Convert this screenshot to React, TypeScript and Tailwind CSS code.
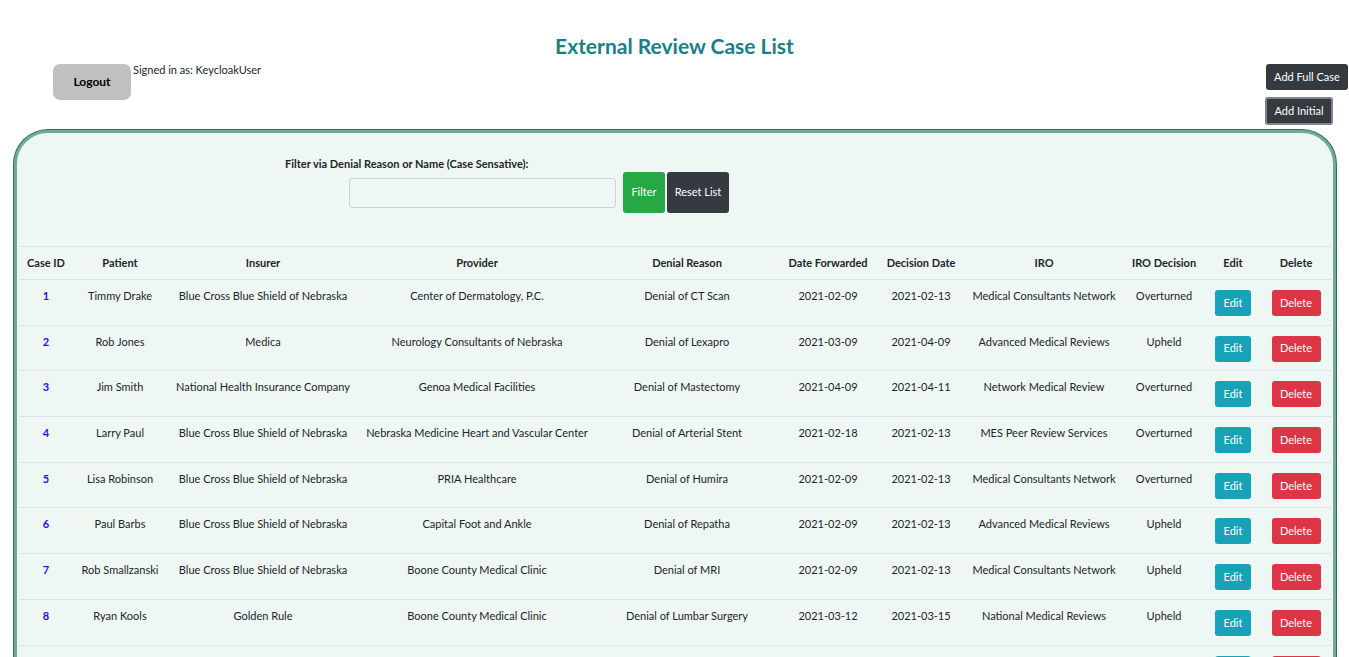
const cases = [
  { id: 1, patient: "Timmy Drake", insurer: "Blue Cross Blue Shield of Nebraska", provider: "Center of Dermatology, P.C.", reason: "Denial of CT Scan", forwarded: "2021-02-09", decided: "2021-02-13", iro: "Medical Consultants Network", decision: "Overturned" },
  { id: 2, patient: "Rob Jones", insurer: "Medica", provider: "Neurology Consultants of Nebraska", reason: "Denial of Lexapro", forwarded: "2021-03-09", decided: "2021-04-09", iro: "Advanced Medical Reviews", decision: "Upheld" },
  { id: 3, patient: "Jim Smith", insurer: "National Health Insurance Company", provider: "Genoa Medical Facilities", reason: "Denial of Mastectomy", forwarded: "2021-04-09", decided: "2021-04-11", iro: "Network Medical Review", decision: "Overturned" },
  { id: 4, patient: "Larry Paul", insurer: "Blue Cross Blue Shield of Nebraska", provider: "Nebraska Medicine Heart and Vascular Center", reason: "Denial of Arterial Stent", forwarded: "2021-02-18", decided: "2021-02-13", iro: "MES Peer Review Services", decision: "Overturned" },
  { id: 5, patient: "Lisa Robinson", insurer: "Blue Cross Blue Shield of Nebraska", provider: "PRIA Healthcare", reason: "Denial of Humira", forwarded: "2021-02-09", decided: "2021-02-13", iro: "Medical Consultants Network", decision: "Overturned" },
  { id: 6, patient: "Paul Barbs", insurer: "Blue Cross Blue Shield of Nebraska", provider: "Capital Foot and Ankle", reason: "Denial of Repatha", forwarded: "2021-02-09", decided: "2021-02-13", iro: "Advanced Medical Reviews", decision: "Upheld" },
  { id: 7, patient: "Rob Smallzanski", insurer: "Blue Cross Blue Shield of Nebraska", provider: "Boone County Medical Clinic", reason: "Denial of MRI", forwarded: "2021-02-09", decided: "2021-02-13", iro: "Medical Consultants Network", decision: "Upheld" },
  { id: 8, patient: "Ryan Kools", insurer: "Golden Rule", provider: "Boone County Medical Clinic", reason: "Denial of Lumbar Surgery", forwarded: "2021-03-12", decided: "2021-03-15", iro: "National Medical Reviews", decision: "Upheld" },
  { id: 9, patient: "Sara Lane", insurer: "Medica", provider: "PRIA Healthcare", reason: "Denial of Physical Therapy", forwarded: "2021-03-20", decided: "2021-03-28", iro: "Network Medical Review", decision: "Upheld" },
];

const headers = ["Case ID", "Patient", "Insurer", "Provider", "Denial Reason", "Date Forwarded", "Decision Date", "IRO", "IRO Decision", "Edit", "Delete"];

export default function App() {
  return (
    <div className="min-h-screen bg-white text-[#212529] font-['Lato','Open_Sans',sans-serif]">
      <h1 className="pt-[32px] text-center text-[21px] font-bold leading-[27px] text-[#17808a]">External Review Case List</h1>

      <div className="mt-[5px] flex justify-between">
        <div className="flex items-start pl-[53px]">
          <button className="h-[36px] w-[78px] rounded-[7px] bg-[#c0c0c0] text-[12px] font-bold text-black">Logout</button>
          <span className="ml-[2px] -mt-[1px] text-[11px] leading-[14px]">Signed in as: KeycloakUser</span>
        </div>
        <div className="flex flex-col items-start pr-[1px]">
          <button className="h-[26px] w-[82px] rounded-[3px] bg-[#343a40] text-[11px] text-white">Add Full Case</button>
          <button className="mt-[7px] -ml-[1px] h-[28px] w-[68px] rounded-[3px] border-2 border-[#7d838a] bg-[#343a40] text-[11px] text-white">Add Initial</button>
        </div>
      </div>

      <div className="mt-[5px] ml-[14px] mr-[13px] rounded-tl-[34px] rounded-tr-[34px] border-[3px] border-[#6aae94] bg-[#eff7f4] px-[2px] shadow-[0_0_0_1px_#3d6b59]">
        <div className="pt-[24px]">
          <div className="pl-[266px] text-[11px] font-bold leading-[14px]">Filter via Denial Reason or Name (Case Sensative):</div>
          <div className="mt-[1px] flex items-center pl-[330px]">
            <input className="h-[30px] w-[267px] rounded-[3px] border border-[#ced4da] bg-[#eff7f4]" />
            <button className="ml-[7px] h-[41px] w-[42px] rounded-[3px] bg-[#28a745] text-[11px] text-white">Filter</button>
            <button className="ml-[2px] h-[41px] w-[62px] rounded-[3px] bg-[#343a40] text-[11px] text-white">Reset List</button>
          </div>
        </div>

        <table className="mt-[33px] w-full table-fixed border-collapse text-[11px]">
          <colgroup>
            <col className="w-[54px]" />
            <col className="w-[94px]" />
            <col className="w-[192px]" />
            <col className="w-[236px]" />
            <col className="w-[184px]" />
            <col className="w-[98px]" />
            <col className="w-[88px]" />
            <col className="w-[158px]" />
            <col className="w-[82px]" />
            <col className="w-[56px]" />
            <col className="w-[70px]" />
          </colgroup>
          <thead>
            <tr className="h-[33px] border-y border-[#dee2e6]">
              {headers.map((h) => (
                <th key={h} className="text-center font-bold leading-[14px]">{h}</th>
              ))}
            </tr>
          </thead>
          <tbody>
            {cases.map((c) => (
              <tr key={c.id} className="h-[45.7px] border-b border-[#dee2e6] align-top">
                <td className="pt-[9px] text-center font-bold leading-[14px] text-[#1a0dff]">{c.id}</td>
                <td className="pt-[9px] text-center leading-[14px]">{c.patient}</td>
                <td className="pt-[9px] text-center leading-[14px]">{c.insurer}</td>
                <td className="pt-[9px] text-center leading-[14px]">{c.provider}</td>
                <td className="pt-[9px] text-center leading-[14px]">{c.reason}</td>
                <td className="pt-[9px] text-center leading-[14px]">{c.forwarded}</td>
                <td className="pt-[9px] text-center leading-[14px]">{c.decided}</td>
                <td className="pt-[9px] text-center leading-[14px]">{c.iro}</td>
                <td className="pt-[9px] text-center leading-[14px]">{c.decision}</td>
                <td className="pt-[10px] text-center">
                  <button className="h-[26px] w-[36px] rounded-[3px] bg-[#17a2b8] text-[11px] text-white">Edit</button>
                </td>
                <td className="pt-[10px] text-center">
                  <button className="h-[26px] w-[49px] rounded-[3px] bg-[#dc3545] text-[11px] text-white">Delete</button>
                </td>
              </tr>
            ))}
          </tbody>
        </table>
      </div>
    </div>
  );
}
